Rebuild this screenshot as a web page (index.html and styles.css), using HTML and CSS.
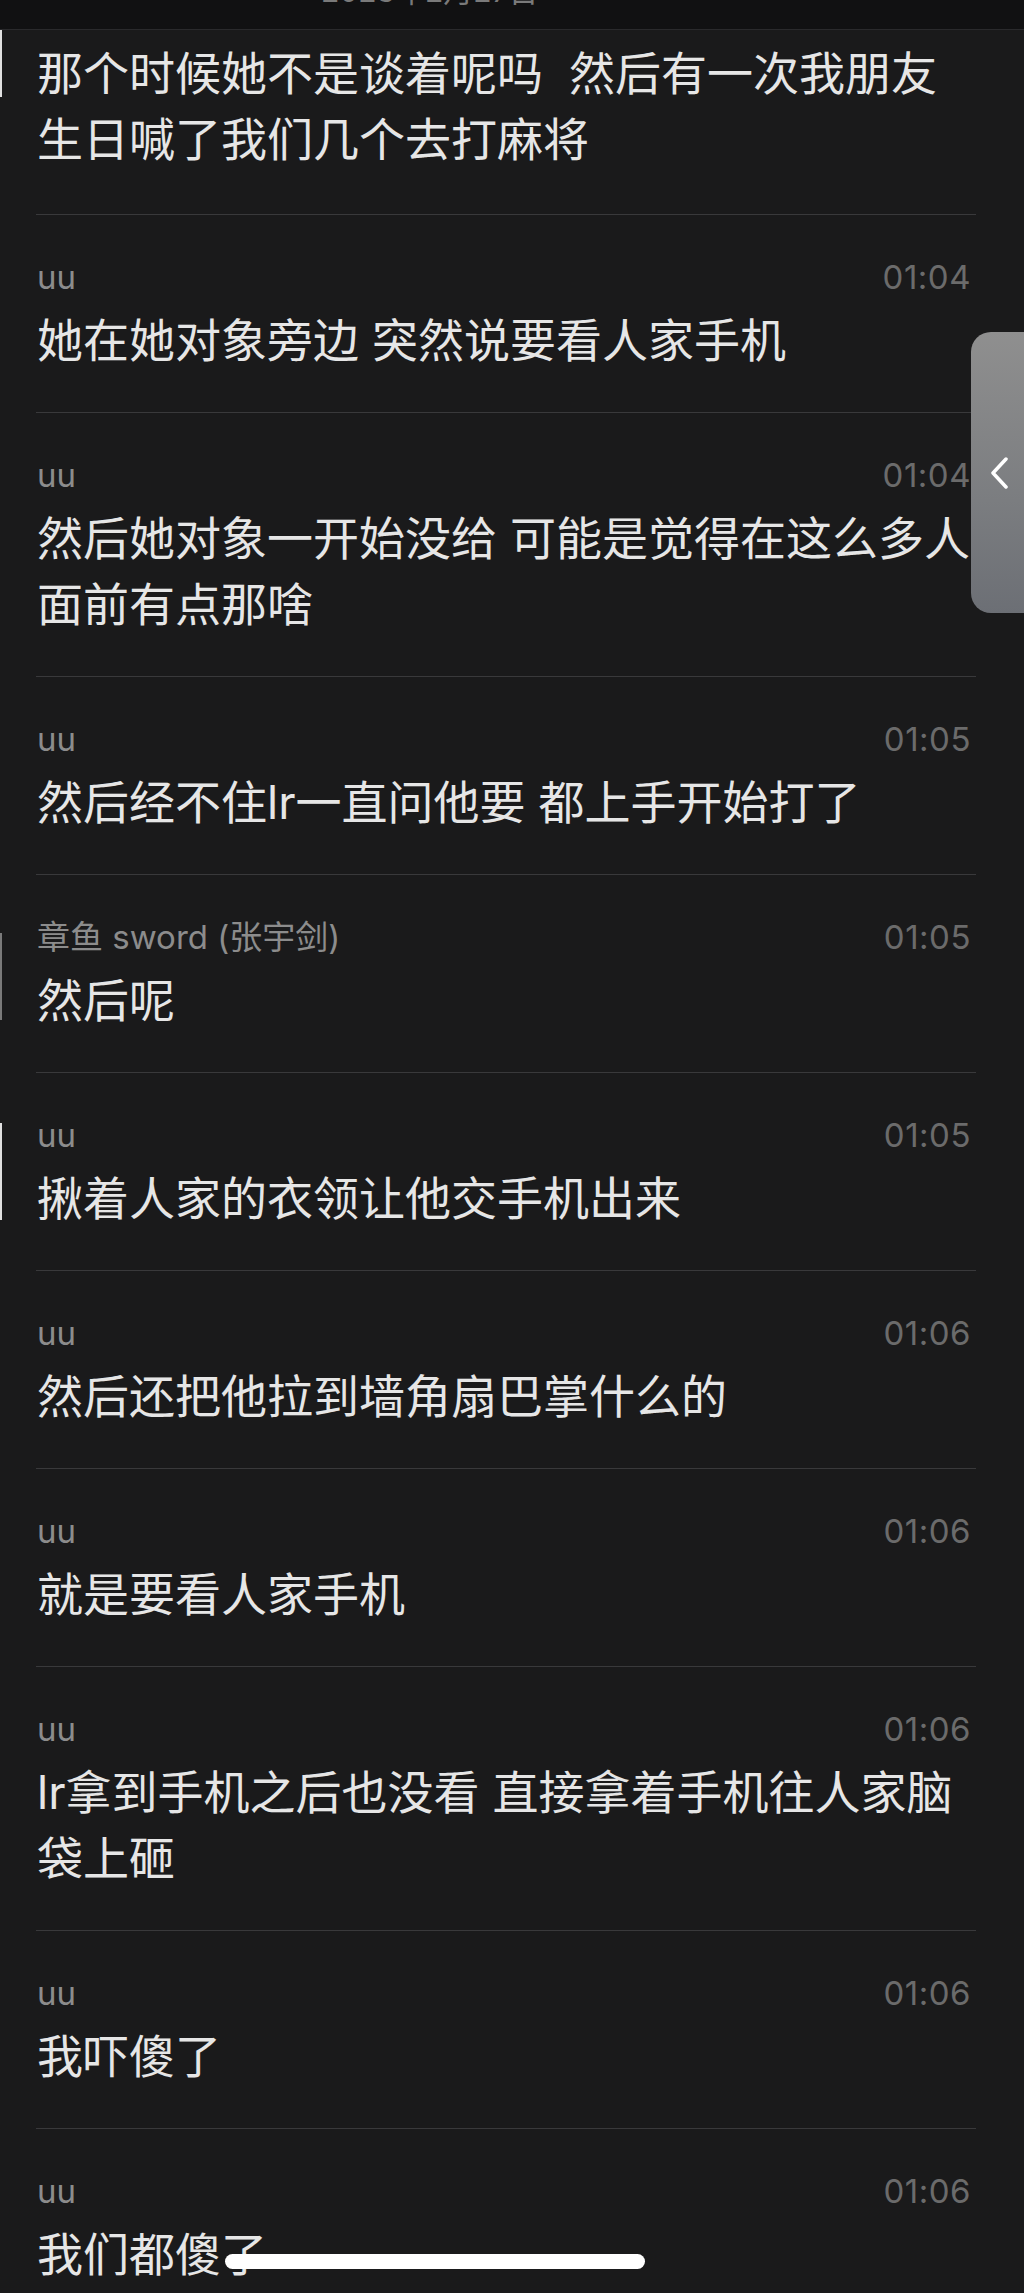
FILE: index.html
```html
<!DOCTYPE html>
<html lang="zh-CN">
<head>
    <meta charset="UTF-8">
    <meta name="viewport" content="width=device-width, initial-scale=1.0">
    <title>聊天记录</title>
    <link rel="stylesheet" href="styles.css">
</head>
<body>
    <header class="topbar">
        <span class="topbar-date">2023年2月27日</span>
    </header>

    <ul class="chat">
        <li class="msg edge-a">
            <p class="msg-text">那个时候她不是谈着呢吗&nbsp; 然后有一次我朋友<br>生日喊了我们几个去打麻将</p>
        </li>
        <li class="msg">
            <div class="msg-meta"><span class="msg-name">uu</span><span class="msg-time">01:04</span></div>
            <p class="msg-text">她在她对象旁边 突然说要看人家手机</p>
        </li>
        <li class="msg">
            <div class="msg-meta"><span class="msg-name">uu</span><span class="msg-time">01:04</span></div>
            <p class="msg-text">然后她对象一开始没给 可能是觉得在这么多人<br>面前有点那啥</p>
        </li>
        <li class="msg">
            <div class="msg-meta"><span class="msg-name">uu</span><span class="msg-time">01:05</span></div>
            <p class="msg-text">然后经不住lr一直问他要 都上手开始打了</p>
        </li>
        <li class="msg edge-b">
            <div class="msg-meta"><span class="msg-name">章鱼 sword (张宇剑)</span><span class="msg-time">01:05</span></div>
            <p class="msg-text">然后呢</p>
        </li>
        <li class="msg edge-c">
            <div class="msg-meta"><span class="msg-name">uu</span><span class="msg-time">01:05</span></div>
            <p class="msg-text">揪着人家的衣领让他交手机出来</p>
        </li>
        <li class="msg">
            <div class="msg-meta"><span class="msg-name">uu</span><span class="msg-time">01:06</span></div>
            <p class="msg-text">然后还把他拉到墙角扇巴掌什么的</p>
        </li>
        <li class="msg">
            <div class="msg-meta"><span class="msg-name">uu</span><span class="msg-time">01:06</span></div>
            <p class="msg-text">就是要看人家手机</p>
        </li>
        <li class="msg">
            <div class="msg-meta"><span class="msg-name">uu</span><span class="msg-time">01:06</span></div>
            <p class="msg-text">lr拿到手机之后也没看 直接拿着手机往人家脑<br>袋上砸</p>
        </li>
        <li class="msg">
            <div class="msg-meta"><span class="msg-name">uu</span><span class="msg-time">01:06</span></div>
            <p class="msg-text">我吓傻了</p>
        </li>
        <li class="msg">
            <div class="msg-meta"><span class="msg-name">uu</span><span class="msg-time">01:06</span></div>
            <p class="msg-text">我们都傻了</p>
        </li>
    </ul>

    <div class="side-tab">
        <svg width="18" height="32" viewBox="0 0 18 32">
            <polyline points="16,2 3,16 16,30" fill="none" stroke="#fff" stroke-width="3.5" stroke-linecap="round" stroke-linejoin="round"/>
        </svg>
    </div>

    <div class="home-bar"></div>
</body>
</html>
```

FILE: styles.css
```css
html, body {
    margin: 0;
    padding: 0;
}

body {
    font-family: Inter, "Noto Sans CJK SC", sans-serif;
    background-color: #1a1a1b;
    color: #e6e6e6;
    height: 2293px;
    overflow: hidden;
    position: relative;
}

.topbar {
    height: 29px;
    background-color: #111112;
    border-bottom: 1px solid #2a2a2c;
    overflow: hidden;
}

.topbar-date {
    display: block;
    padding-left: 321px;
    margin-top: -26px;
    font-size: 30px;
    line-height: 34px;
    color: #7a7a7a;
}

.chat {
    list-style: none;
    margin: 0;
    padding: 0;
}

.msg {
    position: relative;
    margin: 0 48px 0 36px;
    padding: 42px 0 39px 1px;
    border-bottom: 1px solid #39393b;
}

.msg:first-child {
    padding-top: 10px;
    padding-bottom: 42px;
}

.msg-meta {
    display: flex;
    justify-content: space-between;
    align-items: center;
    height: 40px;
    line-height: 40px;
    margin-bottom: 10px;
}

.msg-name {
    font-size: 33px;
    color: #8c8c8c;
}

.msg-time {
    font-size: 33px;
    letter-spacing: 0.5px;
    padding-right: 5px;
    color: #6b6b6b;
}

.msg-text {
    margin: 0;
    font-size: 46px;
    line-height: 66px;
    color: #e6e6e6;
}

/* thin marks on the left screen edge */
.edge-a::before,
.edge-b::before,
.edge-c::before {
    content: "";
    position: absolute;
    left: -36px;
    width: 2px;
    background-color: #e0e0e0;
}

.edge-a::before {
    top: 0;
    height: 67px;
}

.edge-b::before {
    top: 58px;
    height: 87px;
    background-color: #7a7a7a;
}

.edge-c::before {
    top: 50px;
    height: 97px;
}

.side-tab {
    position: absolute;
    top: 332px;
    right: 0;
    width: 53px;
    height: 281px;
    border-radius: 20px 0 0 20px;
    background: linear-gradient(to bottom, #8f8f8f, #7b7d80 60%, #6c6f75);
    display: flex;
    align-items: center;
    padding-left: 19px;
    box-sizing: border-box;
}

.home-bar {
    position: absolute;
    left: 225px;
    top: 2254px;
    width: 420px;
    height: 15px;
    border-radius: 8px;
    background-color: #fff;
}
```
